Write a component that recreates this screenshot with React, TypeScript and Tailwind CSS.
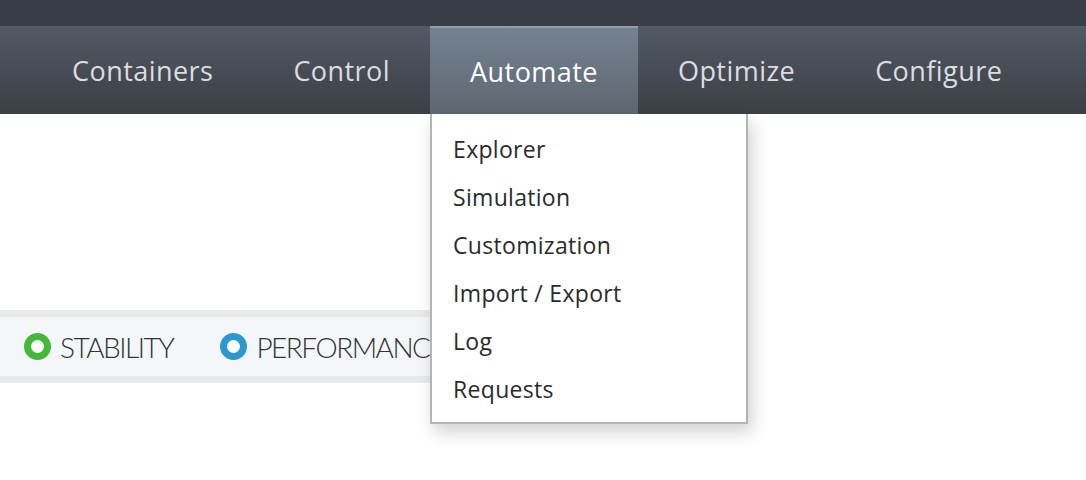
import React from 'react';

const tabs = ['Containers', 'Control', 'Automate', 'Optimize', 'Configure'];
const menu = ['Explorer', 'Simulation', 'Customization', 'Import / Export', 'Log', 'Requests'];

const App: React.FC = () => {
  return (
    <div className="relative w-[1086px] h-[480px] bg-white overflow-hidden font-['Open_Sans',sans-serif]">
      {/* top strip */}
      <div className="h-[26px] bg-[#393d45]" />

      {/* main nav */}
      <nav className="h-[88px] bg-gradient-to-b from-[#535a64] to-[#3b3f46] flex pl-[32px]">
        {tabs.map(t => {
          const active = t === 'Automate';
          return (
            <div key={t} className="relative">
              <div
                className={
                  active
                    ? 'h-full px-[40px] pt-[2px] flex items-center text-[27px] tracking-[0.45px] text-white bg-gradient-to-b from-[#748291] to-[#5e6771] border-t-2 border-[#939da7]'
                    : 'h-full px-[40px] pt-[2px] flex items-center text-[27px] tracking-[0.45px] text-[#dcdde0]'
                }
              >
                {t}
              </div>
              {active && (
                <div className="absolute left-0 top-full w-[318px] bg-white border-2 border-t-0 border-[#b4b4b4] shadow-[4px_8px_16px_rgba(0,0,0,0.18)] pt-[11px] pb-[9px] z-10">
                  {menu.map(m => (
                    <div key={m} className="h-[48px] flex items-center pl-[21px] text-[23px] tracking-[0.3px] text-[#2b2b2b]">
                      {m}
                    </div>
                  ))}
                </div>
              )}
            </div>
          );
        })}
      </nav>

      {/* status strip */}
      <div className="mt-[196px] w-[600px] bg-[#e8ebee] py-[7px]">
        <div className="h-[59px] bg-[#f4f7fa] flex items-center pl-[24px] gap-[47px] font-['Lato',sans-serif] font-light text-[28px] text-[#333] tracking-[-1.5px]">
          <div className="flex items-center gap-[9px]">
            <span className="w-[27px] h-[27px] rounded-full border-[7.5px] border-[#44b935] bg-white" />
            <span>STABILITY</span>
          </div>
          <div className="flex items-center gap-[9px]">
            <span className="w-[27px] h-[27px] rounded-full border-[7.5px] border-[#2c98d0] bg-white" />
            <span>PERFORMANCE</span>
          </div>
        </div>
      </div>
    </div>
  );
};

export default App;
